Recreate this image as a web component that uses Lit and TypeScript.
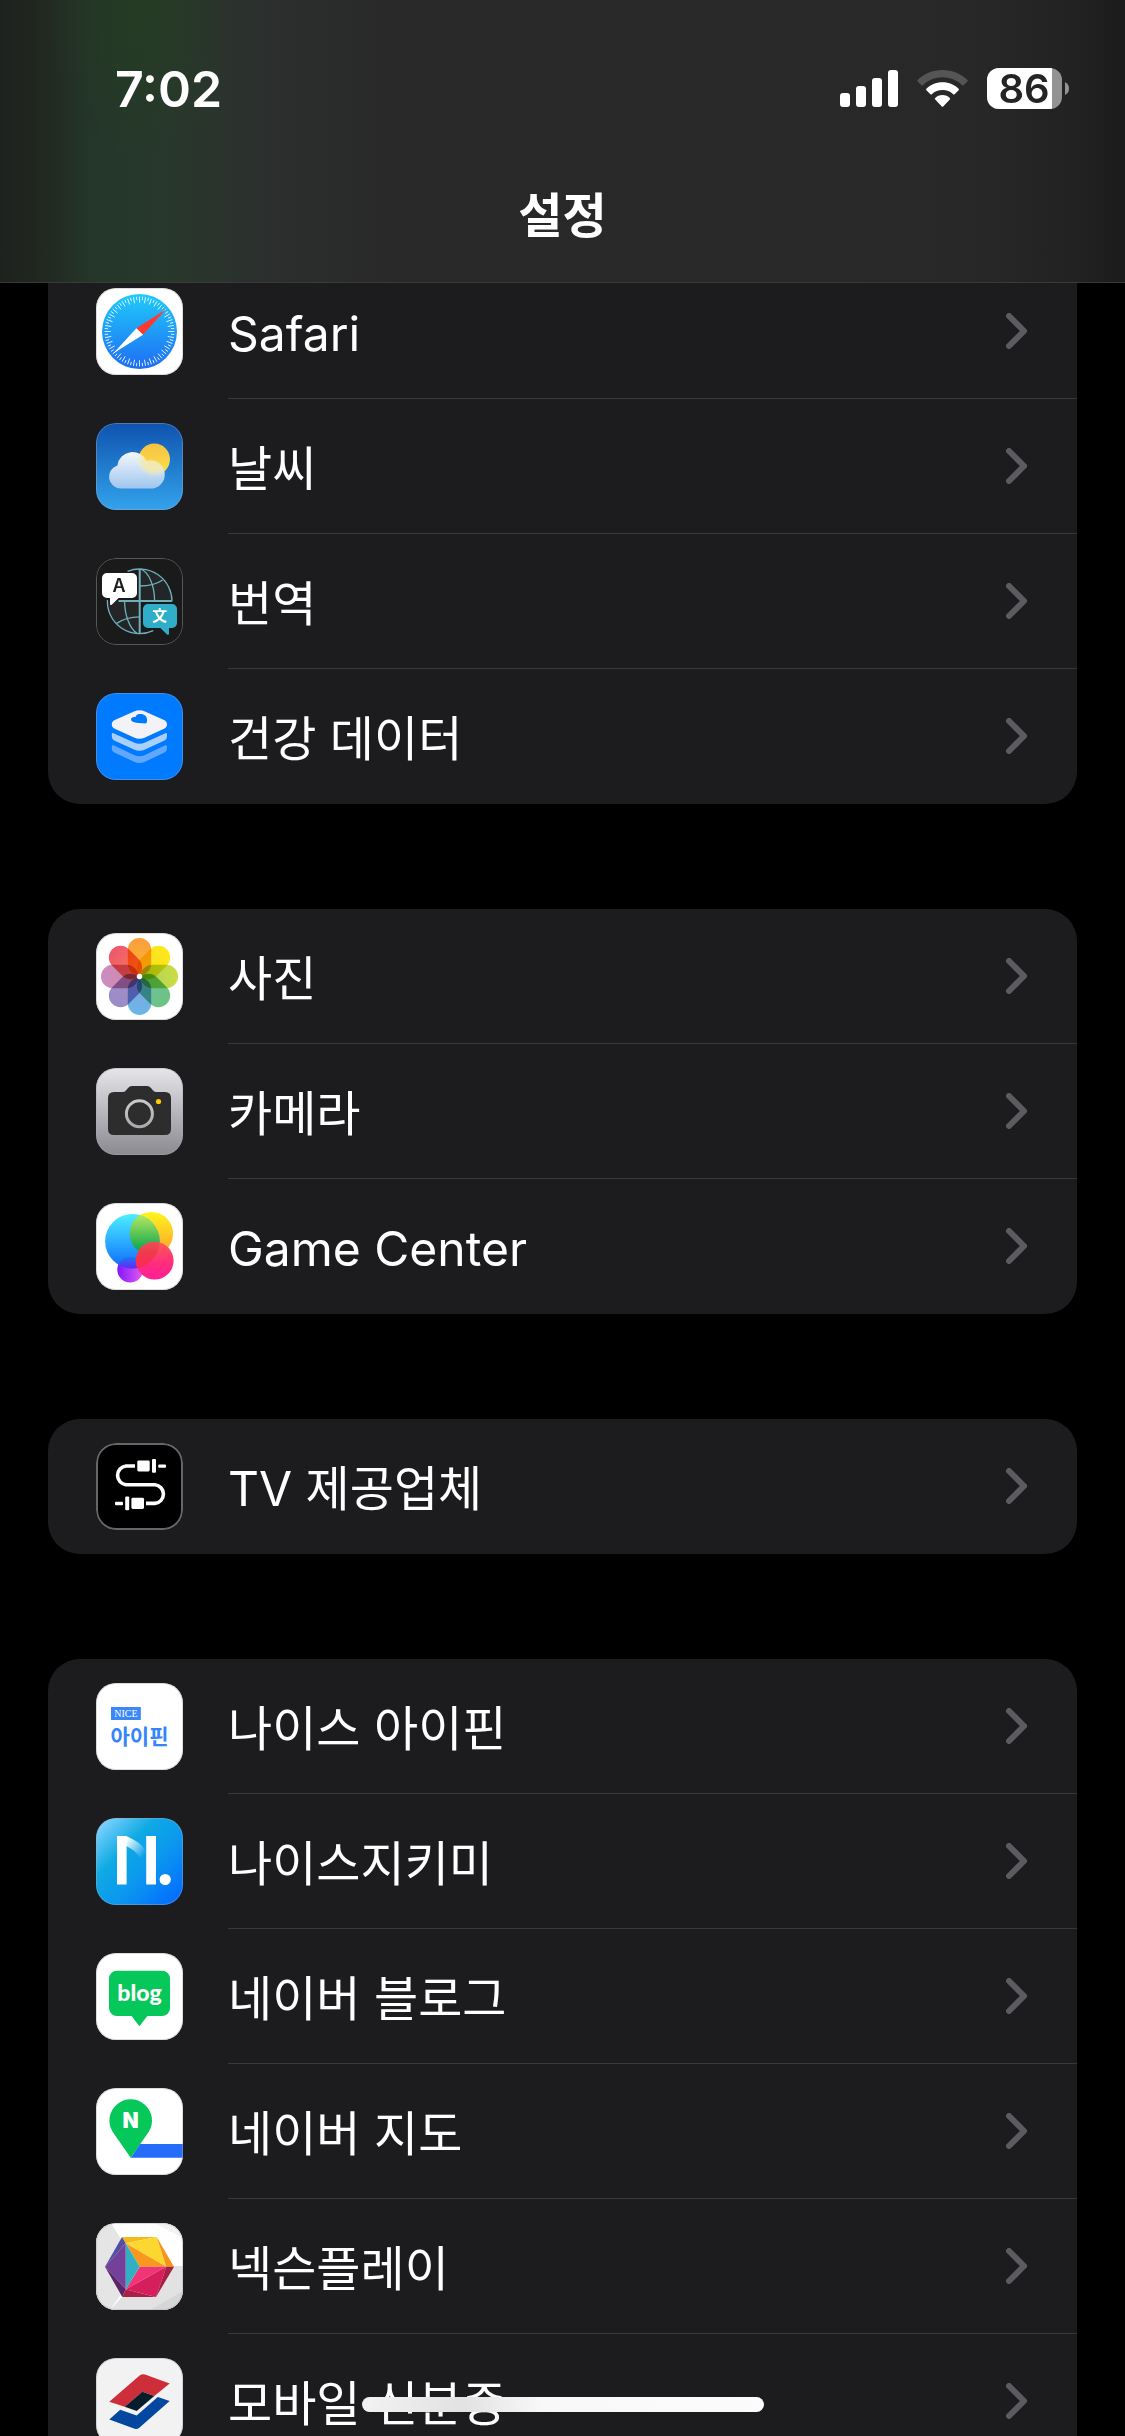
import { LitElement, html, svg, css, TemplateResult } from "lit";
import { customElement, property } from "lit/decorators.js";

type Row = { id: string; label: string };

const GROUPS: Row[][] = [
  [
    { id: "safari", label: "Safari" },
    { id: "weather", label: "날씨" },
    { id: "translate", label: "번역" },
    { id: "health", label: "건강 데이터" },
  ],
  [
    { id: "photos", label: "사진" },
    { id: "camera", label: "카메라" },
    { id: "game", label: "Game Center" },
  ],
  [{ id: "tv", label: "TV 제공업체" }],
  [
    { id: "ipin", label: "나이스 아이핀" },
    { id: "keeper", label: "나이스지키미" },
    { id: "blog", label: "네이버 블로그" },
    { id: "map", label: "네이버 지도" },
    { id: "nexon", label: "넥슨플레이" },
    { id: "mobileid", label: "모바일 신분증" },
  ],
];

const TICKS = Array.from({ length: 72 }, (_, i) => i);

const PETALS: [number, string, string][] = [
  [0, "#f9a03c", "#fdb92e"],
  [45, "#fde61c", "#efe01a"],
  [90, "#c9dc44", "#a5cf6a"],
  [135, "#6cc382", "#6fc0b0"],
  [180, "#6cb5e8", "#8aa4d6"],
  [225, "#9a8cc8", "#a58fc4"],
  [270, "#cd8cc0", "#d08a9c"],
  [315, "#f0596a", "#f5805a"],
];

const CLOUD =
  "M25 65.5A11.8 11.8 0 0 1 21.4 42.4A15.3 15.3 0 0 1 50.6 38.2A14 14 0 1 1 53.5 65.5Z";

const ART: Record<string, TemplateResult> = {
  safari: svg`
    <defs><linearGradient id="sf" x1="0" y1="0" x2="0" y2="1">
      <stop offset="0" stop-color="#1fcbfb"/><stop offset="1" stop-color="#1f6cf3"/>
    </linearGradient></defs>
    <rect width="87" height="87" fill="#fff"/>
    <circle cx="43.5" cy="43.5" r="37.5" fill="url(#sf)"/>
    ${TICKS.map(
      (i) => svg`<line x1="43.5" y1="8.6" x2="43.5" y2=${i % 2 ? 12 : 14.8}
        stroke="#fff" stroke-width="0.8" transform="rotate(${i * 5} 43.5 43.5)"/>`,
    )}
    <path d="M70 21.3L47 46.8L40.4 40.2Z" fill="#ff3b30"/>
    <path d="M17.2 65.4L40.4 40.2L47 46.8Z" fill="#fff"/>`,
  weather: svg`
    <defs>
      <linearGradient id="w1" x1="0" y1="0" x2="0" y2="1">
        <stop offset="0" stop-color="#0f53ae"/><stop offset="1" stop-color="#33a3ec"/>
      </linearGradient>
      <linearGradient id="w2" x1="0" y1="0" x2="0" y2="1">
        <stop offset="0" stop-color="#f4f7fd"/><stop offset="1" stop-color="#9fc6ee"/>
      </linearGradient>
      <linearGradient id="w3" x1="0" y1="0" x2="0" y2="1">
        <stop offset="0" stop-color="#f6c244"/><stop offset="1" stop-color="#fbe24a"/>
      </linearGradient>
      <radialGradient id="w4"><stop offset="0.6" stop-color="#f6e9a8" stop-opacity="0.9"/>
        <stop offset="1" stop-color="#f6eeb8" stop-opacity="0"/></radialGradient>
      <clipPath id="wc"><path d=${CLOUD}/></clipPath>
    </defs>
    <rect width="87" height="87" fill="url(#w1)"/>
    <circle cx="58.3" cy="36.3" r="15.7" fill="url(#w3)"/>
    <path d=${CLOUD} fill="url(#w2)"/>
    <circle cx="58.3" cy="36.3" r="18" fill="url(#w4)" clip-path="url(#wc)"/>`,
  translate: svg`
    <rect width="87" height="87" fill="#1a1a1b"/>
    <path d="M43.7 43V11A32.3 32.3 0 0 1 76 43ZM43.7 43H11.4A32.3 32.3 0 0 0 43.7 75.6Z" fill="#242526"/>
    <g fill="none" stroke="#6fb0bc" stroke-width="1.3">
      <path d="M31.5 13.4A32.3 32.3 0 0 1 76 43.3"/>
      <path d="M11.4 42A32.3 32.3 0 0 0 57.3 72.6"/>
      <path d="M44.5 11C53 14 58.6 28 58.6 43"/>
      <path d="M28.6 43C28.6 56 33 70 41 75.4"/>
      <path d="M43.7 28C52 28 61 26 66.6 22"/>
      <path d="M20.6 65.4C27 61 35 58.8 43.7 58.8"/>
      <path d="M43.7 11V75.6M22.5 43H76" stroke-width="2"/>
    </g>
    <path d="M11 15H36A5 5 0 0 1 41 20V35A5 5 0 0 1 36 40H22.6L16 46.6Q14 48 14 45.6V40H11A5 5 0 0 1 6 35V20A5 5 0 0 1 11 15Z" fill="#fff"/>
    <text x="23" y="34" text-anchor="middle" class="glyph" font-size="18" font-weight="600" fill="#1c1c1e">A</text>
    <path d="M52 46H76A5 5 0 0 1 81 51V65A5 5 0 0 1 76 70H73V75.4Q73 77.6 71 76.4L64.4 70H52A5 5 0 0 1 47 65V51A5 5 0 0 1 52 46Z" fill="#30adc8"/>
    <text x="63.7" y="63.4" text-anchor="middle" class="glyph" font-size="15" font-weight="700" fill="#fff">文</text>`,
  health: svg`
    <rect width="87" height="87" fill="#007aff"/>
    <path d="M15.8 53.6Q15.8 51.6 18 52.6L38 62Q43.5 64.4 49 62L68.8 52.6Q71 51.6 71 53.6V55Q71 58.4 68 59.8L49 68.8Q43.5 71.2 38 68.8L18.8 59.8Q15.8 58.4 15.8 55Z" fill="#62a7ff"/>
    <path d="M15.8 41.4Q15.8 39.4 18 40.4L38 49.6Q43.5 52 49 49.6L68.8 40.4Q71 39.4 71 41.4V43Q71 46.4 68 47.8L49 56.6Q43.5 59 38 56.6L18.8 47.8Q15.8 46.4 15.8 43Z" fill="#abcffb"/>
    <path d="M38 18.4Q43.5 16 49 18.4L68 27Q71 28.4 71 31.4Q71 34.4 68 35.8L49 44.6Q43.5 47 38 44.6L18.8 35.8Q15.8 34.4 15.8 31.4Q15.8 28.4 18.8 27Z" fill="#f2f2f7"/>
    <path d="M49.6 30.4Q51 30.4 51 28.6V26.4C51 22.6 47 20.8 43.6 21C41 21.2 39.6 22.6 40 23.8C37.4 23.6 35 24.6 35 26.6C35 29 39 30.4 49.6 30.4Z" fill="#007aff"/>`,
  photos: svg`
    <defs>${PETALS.map(
      ([a, c1, c2]) => svg`<linearGradient id="p${a}" x1="0" y1="0" x2="0" y2="1">
        <stop offset="0.1" stop-color=${c1}/><stop offset="1" stop-color=${c2}/></linearGradient>`,
    )}</defs>
    <rect width="87" height="87" fill="#fff"/>
    <g class="blend">${PETALS.map(
      ([a]) => svg`<rect class="petal" x="31.8" y="5" width="23.4" height="37.4" rx="11.7"
        fill="url(#p${a})" transform="rotate(${a} 43.5 43.5)"/>`,
    )}</g>
    <circle cx="43.5" cy="43.5" r="2.7" fill="#fff"/>`,
  camera: svg`
    <defs>
      <linearGradient id="c1" x1="0" y1="0" x2="0" y2="1">
        <stop offset="0" stop-color="#e6e5ea"/><stop offset="1" stop-color="#8b8a90"/>
      </linearGradient>
      <linearGradient id="c2" x1="0" y1="0" x2="0" y2="1">
        <stop offset="0" stop-color="#c9c9ce"/><stop offset="1" stop-color="#a9a9ae"/>
      </linearGradient>
    </defs>
    <rect width="87" height="87" fill="url(#c1)"/>
    <path d="M18 24H27Q29 24 30.4 22L32 20Q33.6 18 36 18H51Q53.4 18 55 20L56.6 22Q58 24 60 24H69Q75 24 75 30V61Q75 67 69 67H18Q12 67 12 61V30Q12 24 18 24Z" fill="#2d2d2d"/>
    <circle cx="43.4" cy="45.7" r="13" fill="none" stroke="url(#c2)" stroke-width="3"/>
    <circle cx="62.5" cy="33.5" r="2.6" fill="#fecb00"/>`,
  game: svg`
    <defs>
      <linearGradient id="g1" x1="0" y1="0" x2="0" y2="1"><stop offset="0" stop-color="#4defff"/><stop offset="1" stop-color="#0b6bff"/></linearGradient>
      <linearGradient id="g2" x1="0" y1="0" x2="0" y2="1"><stop offset="0" stop-color="#fdf51e"/><stop offset="1" stop-color="#ff9d2c"/></linearGradient>
      <linearGradient id="g3" x1="0" y1="0" x2="1" y2="0"><stop offset="0" stop-color="#8017ff"/><stop offset="1" stop-color="#e45cec"/></linearGradient>
      <linearGradient id="g4" x1="0" y1="0" x2="0" y2="1"><stop offset="0" stop-color="#ff5a50"/><stop offset="0.6" stop-color="#ff2a80"/><stop offset="1" stop-color="#ff1f96"/></linearGradient>
      <linearGradient id="g5" x1="0" y1="0" x2="0" y2="1"><stop offset="0" stop-color="#c3ee62"/><stop offset="0.85" stop-color="#14a84e"/></linearGradient>
      <linearGradient id="g6" x1="0" y1="0" x2="0" y2="1"><stop offset="0" stop-color="#1b78f2"/><stop offset="0.5" stop-color="#6a20f6"/></linearGradient>
      <linearGradient id="g7" x1="0" y1="0" x2="0" y2="1"><stop offset="0" stop-color="#e8505a"/><stop offset="0.3" stop-color="#f03a4c"/><stop offset="0.75" stop-color="#ff2458"/></linearGradient>
      <clipPath id="gc"><circle cx="36.4" cy="38.3" r="27.3"/></clipPath>
    </defs>
    <rect width="87" height="87" fill="#fff"/>
    <circle cx="34.2" cy="66.6" r="12.9" fill="url(#g3)"/>
    <circle cx="55.4" cy="30.6" r="21.7" fill="url(#g2)"/>
    <circle cx="36.4" cy="38.3" r="27.3" fill="url(#g1)"/>
    <circle cx="55.4" cy="30.6" r="21.7" fill="url(#g5)" clip-path="url(#gc)"/>
    <circle cx="34.2" cy="66.6" r="12.9" fill="url(#g6)" clip-path="url(#gc)"/>
    <circle cx="58.7" cy="57.7" r="18.9" fill="url(#g4)"/>
    <circle cx="58.7" cy="57.7" r="18.9" fill="url(#g7)" clip-path="url(#gc)"/>`,
  tv: svg`
    <rect width="87" height="87" fill="#000"/>
    <path d="M39 23H30A9.4 9.4 0 0 0 30 41.7H59A9.4 9.4 0 0 1 59 60.4H50" fill="none" stroke="#fff" stroke-width="3.6"/>
    <g fill="#fff">
      <rect x="41.3" y="17.4" width="12.4" height="11" rx="1.4"/>
      <rect x="56" y="16" width="4" height="13.8" rx="1"/>
      <rect x="62.3" y="21.4" width="7.7" height="3.4" rx="1"/>
      <rect x="35.4" y="54.8" width="12.6" height="11.2" rx="1.4"/>
      <rect x="29.2" y="53.4" width="4" height="13.8" rx="1"/>
      <rect x="19" y="58.8" width="8" height="3.4" rx="1"/>
    </g>`,
  ipin: svg`
    <rect width="87" height="87" fill="#fff"/>
    <rect x="15" y="24" width="29.8" height="13" fill="#3a86fb"/>
    <text x="29.9" y="34" text-anchor="middle" class="serif" font-size="10" fill="#fff">NICE</text>
    <text x="43.5" y="61" text-anchor="middle" class="glyph" font-size="21" font-weight="700" fill="#3485fb">아이핀</text>`,
  keeper: svg`
    <defs>
      <linearGradient id="k1" x1="0" y1="0" x2="1" y2="1">
        <stop offset="0.04" stop-color="#86d5ff"/><stop offset="0.34" stop-color="#0faae4"/>
        <stop offset="0.6" stop-color="#0b97ef"/><stop offset="0.92" stop-color="#046ffe"/>
      </linearGradient>
      <linearGradient id="k2" x1="0" y1="0" x2="0.7" y2="1">
        <stop offset="0.05" stop-color="#fff"/><stop offset="0.75" stop-color="#fff" stop-opacity="0"/>
      </linearGradient>
    </defs>
    <rect width="87" height="87" fill="url(#k1)"/>
    <path d="M30 18C42 23 49 29 50.6 36V56C49 44 42 33 30 28Z" fill="url(#k2)"/>
    <path d="M21 18H30.6V66.4H21ZM50.2 18H60V66.4H50.2Z" fill="#fff"/>
    <circle cx="69.2" cy="61.5" r="5.6" fill="#fff"/>`,
  blog: svg`
    <rect width="87" height="87" fill="#fff"/>
    <path d="M21 17.7H66A8 8 0 0 1 74 25.7V55A8 8 0 0 1 66 63H51.4L43.4 73.2L35.6 63H21A8 8 0 0 1 13 55V25.7A8 8 0 0 1 21 17.7Z" fill="#06c75a"/>
    <text x="43.5" y="48" text-anchor="middle" class="round" font-size="23" font-weight="900" fill="#fff">blog</text>`,
  map: svg`
    <rect width="87" height="87" fill="#fff"/>
    <path d="M34.7 69.8L44 56H87V69.8Z" fill="#256cfb"/>
    <path d="M34.7 69.8L16.6 43.8A21.3 21.3 0 1 1 52.8 43.8Z" fill="#06c75a"/>
    <text x="34.7" y="40.4" text-anchor="middle" class="glyph" font-size="21" font-weight="900" fill="#fff">N</text>`,
  nexon: svg`
    <rect width="87" height="87" fill="#fff"/>
    <path d="M0 0H15L26 18L26 70L14 87H0Z" fill="#e5e5e6"/>
    <path d="M26 74L14 87H56L87 69V43H60V74Z" fill="#e2e2e3"/>
    <path d="M54 87L87 68V87Z" fill="#d6d6d7"/>
    <path d="M58 0H87V15Z" fill="#f3f3f4"/>
    <path d="M26 14H60.7L29.7 20.3Z" fill="#f4b91d"/>
    <path d="M29.7 20.3L60.7 14L70.3 43.7Z" fill="#fbd72f"/>
    <path d="M29.7 20.3L70.3 43.7H43.7Z" fill="#f8981f"/>
    <path d="M60.7 14L78 43.7H70.3Z" fill="#f7941d"/>
    <path d="M43.7 43.7H70.3L29.7 66.3Z" fill="#ef3478"/>
    <path d="M70.3 43.7L60 74L29.7 66.3Z" fill="#d71e5c"/>
    <path d="M70.3 43.7H78L60 74Z" fill="#a91e45"/>
    <path d="M29.7 66.3L60 74H26.3Z" fill="#ae1f48"/>
    <path d="M29.7 20.3L43.7 43.7L29.7 66.3Z" fill="#31b0c4"/>
    <path d="M9 43.7L29.7 20.3V66.3Z" fill="#744099"/>
    <path d="M9 43.7L26 14L29.7 20.3Z" fill="#5350a3"/>
    <path d="M9 43.7L29.7 66.3L26.3 74Z" fill="#5a2469"/>`,
  mobileid: svg`
    <rect width="87" height="87" fill="#f2f2f3"/>
    <path d="M13.3 43.7L43.6 17.6Q46 15.6 49 16.4L73.7 25.4L58.3 38L46.3 33.7L28.7 48.7Z" fill="#ce2e3a"/>
    <path d="M46.3 33.7L58.3 38L40.7 53L28.7 48.7Z" fill="#081d2b"/>
    <path d="M13.3 61.4L24.2 51.8L40.7 57.6L61.8 39L73.7 43L43.6 69.4Q41 71.6 38 70.6Z" fill="#0347a0"/>`,
};

const SANS = css`"Inter", "Noto Sans CJK KR", sans-serif`;

@customElement("settings-group")
export class SettingsGroup extends LitElement {
  @property({ attribute: false }) rows: Row[] = [];

  static styles = css`
    :host {
      display: block;
      border-radius: 32px;
      background: #1c1c1e;
      overflow: hidden;
    }
    .list {
      margin: 0;
      padding: 0;
      list-style: none;
    }
    .row {
      display: flex;
      align-items: center;
      height: 135px;
      padding-left: 48px;
      gap: 45px;
      color: #fff;
      text-decoration: none;
    }
    .icon {
      flex: none;
      display: block;
      box-sizing: border-box;
      width: 87px;
      height: 87px;
      border-radius: 20px;
      overflow: hidden;
      position: relative;
    }
    .icon svg {
      display: block;
      width: 100%;
      height: 100%;
    }
    .rim {
      position: absolute;
      inset: 0;
      border-radius: 20px;
      border: 1px solid rgba(170, 170, 180, 0.42);
    }
    .rim.strong {
      border: 2px solid #66666a;
    }
    .body {
      flex: 1;
      align-self: stretch;
      display: flex;
      align-items: center;
      justify-content: space-between;
      box-sizing: border-box;
      padding-right: 50px;
      border-bottom: 1px solid #39393c;
    }
    .item:last-child .body {
      border-bottom-color: transparent;
    }
    .label {
      font: 400 48px/64px ${SANS};
      padding-top: 5px;
    }
    .chevron {
      flex: none;
      width: 21px;
      height: 36px;
    }
    .glyph {
      font-family: ${SANS};
    }
    .round {
      font-family: "Lato", sans-serif;
    }
    .serif {
      font-family: "Liberation Serif", serif;
    }
    .blend {
      isolation: isolate;
    }
    .petal {
      mix-blend-mode: multiply;
    }
  `;

  render() {
    return html`<ul class="list">
      ${this.rows.map(
        (r) => html`<li class="item">
          <a class="row" href="#${r.id}">
            <span class="icon" aria-hidden="true">
              <svg viewBox="0 0 87 87">${ART[r.id]}</svg>
              <span class="rim ${r.id === "tv" ? "strong" : ""}"></span>
            </span>
            <span class="body">
              <span class="label">${r.label}</span>
              <svg class="chevron" viewBox="0 0 21 36" aria-hidden="true">
                <path d="M3 3L18 18L3 33" fill="none" stroke="#5b5b60" stroke-width="6"
                  stroke-linecap="round" stroke-linejoin="round"/>
              </svg>
            </span>
          </a>
        </li>`,
      )}
    </ul>`;
  }
}

@customElement("app-root")
export class AppRoot extends LitElement {
  static styles = css`
    :host {
      display: flex;
      flex-direction: column;
      height: 100vh;
      overflow: hidden;
      position: relative;
      background: #000;
      color: #fff;
      font-family: ${SANS};
    }
    .header {
      flex: none;
      box-sizing: border-box;
      border-bottom: 1px solid #3a3a3b;
      background:
        radial-gradient(ellipse 90px 150px at 140px 10px, rgba(36, 62, 30, 0.6), transparent),
        linear-gradient(
          90deg,
          #1e221f 0,
          #20261f 30px,
          #222d24 60px,
          #243529 90px,
          #26382b 130px,
          #28382c 165px,
          #2a342d 215px,
          #2c2f2e 265px,
          #2b2c2c 320px,
          #292929 400px,
          #282828 calc(100% - 160px),
          #222 calc(100% - 50px),
          #1b1b1b 100%
        );
    }
    .status {
      display: flex;
      align-items: center;
      justify-content: space-between;
      height: 177px;
      padding: 0 56px 0 115px;
    }
    .time {
      font-size: 50px;
      line-height: 60px;
      font-weight: 600;
    }
    .indicators {
      display: flex;
      align-items: center;
      gap: 19px;
    }
    .bars {
      width: 58px;
      height: 37px;
    }
    .wifi {
      width: 51px;
      height: 37px;
    }
    .battery {
      width: 82px;
      height: 41px;
      overflow: visible;
    }
    .charge {
      font: 600 40px ${SANS};
    }
    .title {
      margin: 0;
      height: 105px;
      text-align: center;
      font-size: 48px;
      line-height: 78px;
      font-weight: 600;
    }
    .content {
      flex: 1;
      min-height: 0;
      overflow: hidden;
    }
    .groups {
      display: flex;
      flex-direction: column;
      gap: 105px;
      padding: 0 48px;
      margin-top: -19px;
    }
    .group:first-child {
      border-top-left-radius: 0;
      border-top-right-radius: 0;
    }
    .home {
      position: absolute;
      bottom: 24px;
      left: 0;
      right: 0;
      width: 402px;
      height: 15px;
      margin: 0 auto;
      border-radius: 8px;
      background: linear-gradient(90deg, #f2f2f2, #e2e2e2 25%, #f8f8f8 45%, #fcfcfc);
    }
  `;

  render() {
    return html`
      <header class="header">
        <div class="status">
          <span class="time">7:02</span>
          <span class="indicators">
            <svg class="bars" viewBox="0 0 58 37" fill="#fff" aria-hidden="true">
              <rect x="0" y="23" width="10" height="14" rx="3"/>
              <rect x="16" y="16" width="10" height="21" rx="3"/>
              <rect x="32" y="8" width="10" height="29" rx="3"/>
              <rect x="48" y="0" width="10" height="37" rx="3"/>
            </svg>
            <svg class="wifi" viewBox="0 0 51 37" aria-hidden="true">
              <path d="M25.5 0C35.5 0 44.5 4 50.4 10Q51 10.7 50.4 11.4L46.6 15.2Q45.9 15.8 45.2 15.2A28.4 28.4 0 0 0 5.8 15.2Q5.1 15.8 4.4 15.2L0.6 11.4Q0 10.7 0.6 10C6.5 4 15.5 0 25.5 0Z" fill="#555"/>
              <path d="M25.5 12.3C32 12.3 37.6 14.8 41.6 18.8Q42.3 19.5 41.6 20.2L37.6 24.2Q36.9 24.8 36.2 24.2A16 16 0 0 0 14.8 24.2Q14.1 24.8 13.4 24.2L9.4 20.2Q8.7 19.5 9.4 18.8C13.4 14.8 19 12.3 25.5 12.3Z" fill="#fff"/>
              <path d="M25.5 25C28.4 25 31 26.2 32.8 27.9Q33.5 28.7 32.8 29.4L26.2 36.4Q25.5 37 24.8 36.4L18.2 29.4Q17.5 28.7 18.2 27.9C20 26.2 22.6 25 25.5 25Z" fill="#fff"/>
            </svg>
            <svg class="battery" viewBox="0 0 82 41">
              <defs><clipPath id="cell"><rect width="75" height="41" rx="12"/></clipPath></defs>
              <g clip-path="url(#cell)">
                <rect width="75" height="41" fill="#939393"/>
                <rect width="65" height="41" fill="#fff"/>
              </g>
              <path d="M78 14Q82 16 82 20.5T78 27Z" fill="#939393"/>
              <text class="charge" x="37" y="35" text-anchor="middle" fill="#242424">86</text>
            </svg>
          </span>
        </div>
        <h1 class="title">설정</h1>
      </header>
      <main class="content">
        <div class="groups">
          ${GROUPS.map((g) => html`<settings-group class="group" .rows=${g}></settings-group>`)}
        </div>
      </main>
      <div class="home"></div>
    `;
  }
}
